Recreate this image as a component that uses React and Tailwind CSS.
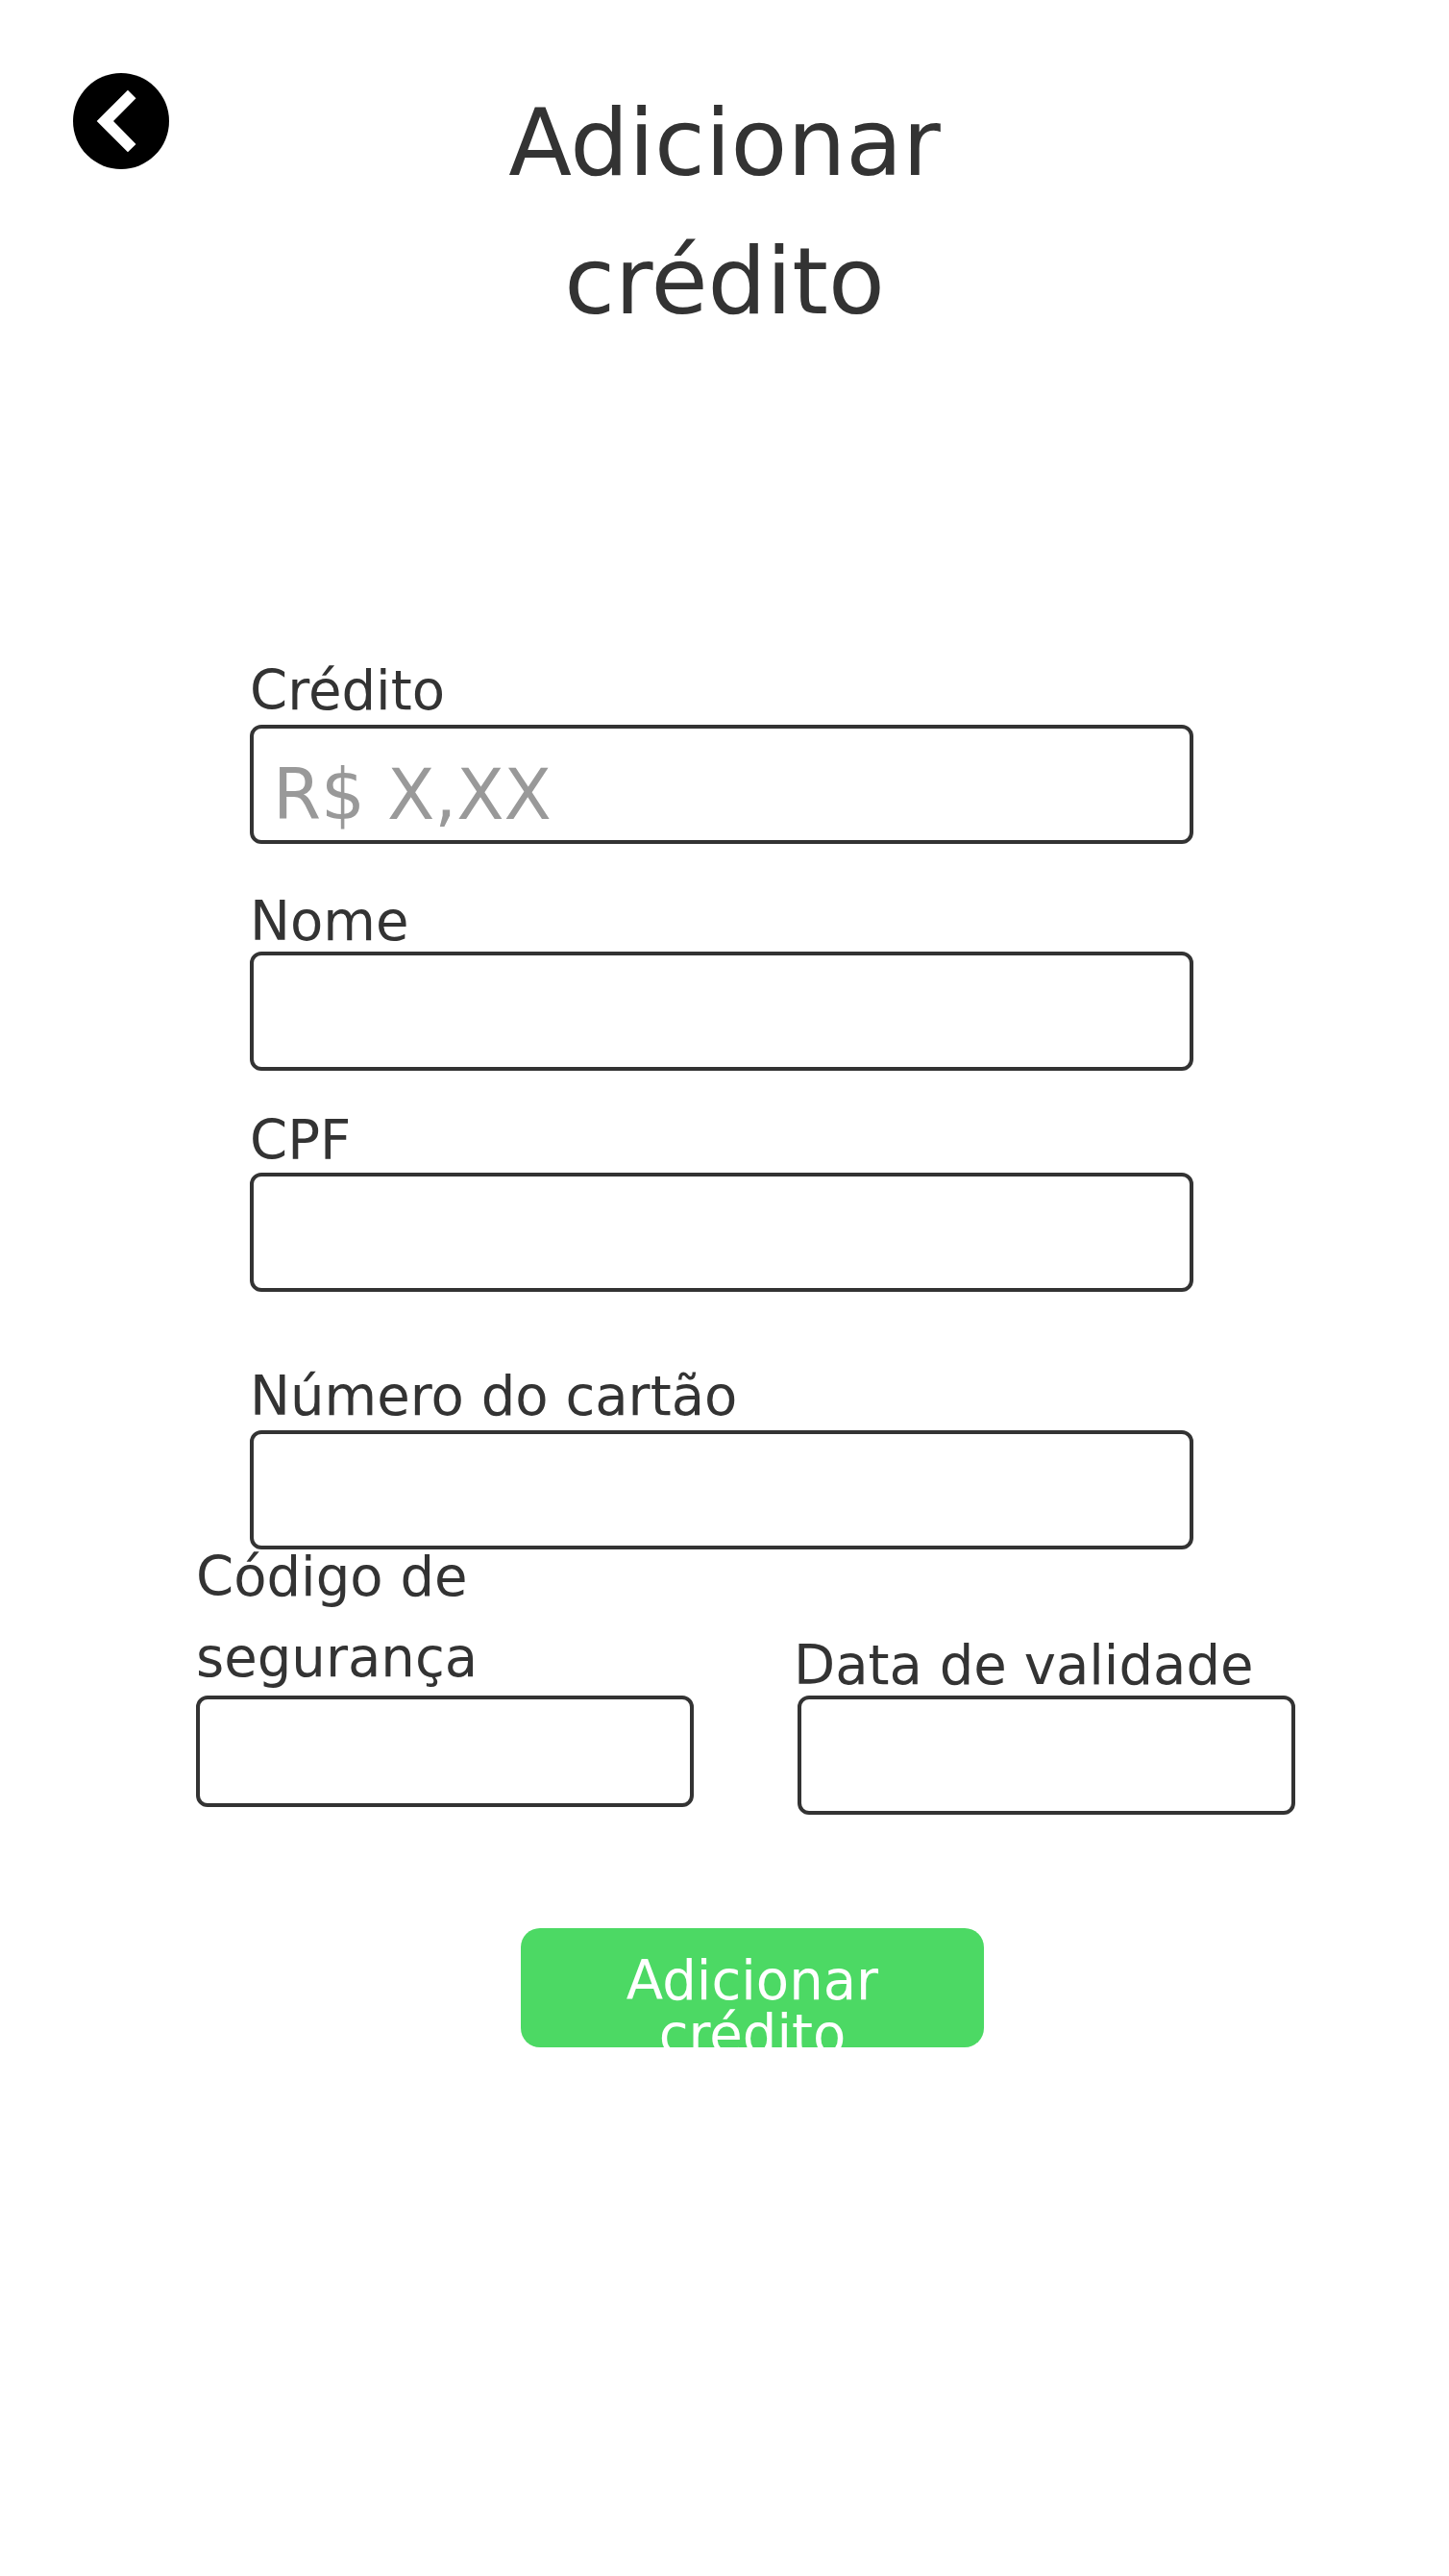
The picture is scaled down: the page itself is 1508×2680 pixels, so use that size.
const inputBase =
  "block w-full rounded-xl border-4 border-[#333333] bg-white px-5 pb-0 pt-[22px] text-[72.1px] leading-[108px] text-[#333333] placeholder:text-[#999999] placeholder:opacity-100 outline-none";

function Field({ id, label, placeholder, className, labelClass, inputClass = "h-[124px]" }) {
  return (
    <div className={className}>
      <label htmlFor={id} className={`block pt-px text-[56.1px] leading-[84px] ${labelClass}`}>
        {label}
      </label>
      <input id={id} type="text" placeholder={placeholder} className={`${inputBase} ${inputClass}`} />
    </div>
  );
}

function BackButton() {
  return (
    <button type="button" aria-label="Voltar" className="size-[100px] shrink-0">
      <svg viewBox="0 0 100 100" className="block size-full">
        <circle cx="50" cy="50" r="50" fill="#000" />
        <path d="M24.7 50 57 17.7 65.5 26.3 42 50 65.5 74 57 82.3Z" fill="#fff" />
      </svg>
    </button>
  );
}

export default function App() {
  return (
    <main className="flex h-[2680px] w-[1508px] flex-col overflow-hidden bg-white font-['DejaVu_Sans',sans-serif] text-[#333333]">
      <header className="flex h-[364px] items-start px-[76px] pt-[76px]">
        <BackButton />
        <h1 className="mt-px flex-1 pr-[100px] text-center text-[96.15px] leading-[144px]">
          Adicionar
          <br />
          crédito
        </h1>
      </header>

      <form className="mt-[312px] flex flex-col">
        <div className="ml-[260px] flex w-[982px] flex-col">
          <Field id="credito" label="Crédito" placeholder="R$ X,XX" labelClass="h-[78px]" />
          <Field id="nome" label="Nome" className="mt-[38px]" labelClass="h-[74px]" />
          <Field id="cpf" label="CPF" className="mt-[30px]" labelClass="h-[76px]" />
          <Field id="cartao" label="Número do cartão" className="mt-[66px]" labelClass="h-[78px]" />
        </div>

        <div className="-mt-[14px] ml-[204px] flex items-start gap-[108px]">
          <Field
            id="codigo"
            label={
              <>
                Código de
                <br />
                segurança
              </>
            }
            className="w-[518px]"
            labelClass="h-[166px]"
            inputClass="h-[116px]"
          />
          <Field
            id="validade"
            label="Data de validade"
            className="mt-[92px] w-[518px]"
            labelClass="-ml-1 h-[74px] whitespace-nowrap"
          />
        </div>

        <button
          type="button"
          className="ml-[542px] mt-[118px] flex h-[124px] w-[482px] items-start justify-center overflow-hidden rounded-[20px] bg-[#4cd964] pt-[27px] text-center text-[56.1px] leading-[56px] text-white"
        >
          <span>
            Adicionar
            <br />
            crédito
          </span>
        </button>
      </form>
    </main>
  );
}
